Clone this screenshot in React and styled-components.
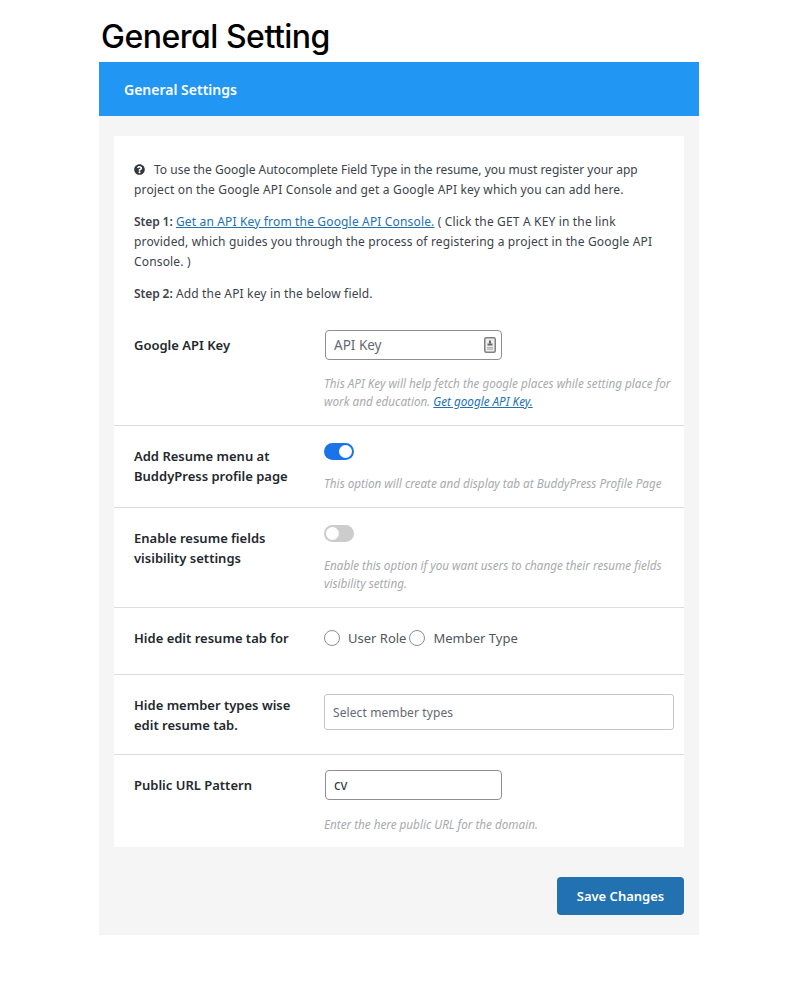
import React from "react";
import styled, { createGlobalStyle } from "styled-components";

const Global = createGlobalStyle`
  html, body {
    margin: 0;
    padding: 0;
    background: #fff;
    font-family: "Noto Sans", "Open Sans", sans-serif;
  }
`;

const Page = styled.div`
  width: 600px;
  margin-left: 99px;
  padding-bottom: 65px;
`;

const Title = styled.h1`
  margin: 0;
  height: 62px;
  padding: 18px 0 0 2px;
  box-sizing: border-box;
  font: 450 32px/38px "Inter", sans-serif;
  font-feature-settings: "cv11" 1;
  letter-spacing: -0.5px;
  color: #000;
`;

const Panel = styled.div`
  background: #f5f5f5;
  width: 600px;
`;

const PanelHead = styled.div`
  height: 54px;
  background: #2196f3;
  color: #fff;
  display: flex;
  align-items: center;
  padding-left: 25px;
  font-size: 14px;
  font-weight: 600;
`;

const PanelBody = styled.div`
  padding: 20px 15px;
`;

const Card = styled.div`
  background: #fff;
  color: #3c434a;
  font-size: 12px;
  line-height: 20px;
`;

const Intro = styled.div`
  padding: 24px 20px 0;

  p {
    margin: 0 0 12px;
    letter-spacing: 0.16px;
  }

  a {
    color: #2271b1;
    text-decoration: underline;
  }

  b {
    font-weight: 600;
    letter-spacing: -0.1px;
  }
`;

const FirstLine = styled.span`
  letter-spacing: 0;
`;

const HelpIcon = styled.svg`
  width: 11px;
  height: 11px;
  margin-right: 9px;
  vertical-align: -1px;
`;

const Row = styled.div`
  display: flex;
  height: ${(p) => p.$h}px;
  box-sizing: border-box;
  padding-top: ${(p) => p.$top}px;
  border-bottom: ${(p) => (p.$last ? "none" : "1px solid #dcdcde")};
`;

const Label = styled.div`
  width: 165px;
  margin: ${(p) => p.$mt}px 25px 0 20px;
  flex: none;
  font-size: 13px;
  font-weight: 600;
  line-height: 20px;
  color: #23282d;
`;

const Field = styled.div`
  width: 350px;
  flex: none;
`;

const InputWrap = styled.div`
  width: 177px;
  height: 30px;
  margin-left: 1px;
  box-sizing: border-box;
  border: 1px solid #8c8f94;
  border-radius: 4px;
  display: flex;
  align-items: center;
  justify-content: space-between;
  padding: 0 5px 0 8px;
  font-size: 13.5px;
  color: ${(p) => (p.$filled ? "#2c3338" : "#646970")};
`;

const Hint = styled.div`
  margin-top: ${(p) => p.$gap}px;
  font-size: 11.7px;
  line-height: 18px;
  font-style: italic;
  color: #a7aaad;

  a {
    color: #2271b1;
    text-decoration: underline;
  }
`;

const Toggle = styled.div`
  width: 30px;
  height: 17px;
  border-radius: 9px;
  background: ${(p) => (p.$on ? "#1a73e8" : "#ccc")};
  display: flex;
  align-items: center;
  justify-content: ${(p) => (p.$on ? "flex-end" : "flex-start")};
  padding: 0 2px;
  box-sizing: border-box;

  &::after {
    content: "";
    width: 13px;
    height: 13px;
    border-radius: 50%;
    background: #fff;
  }
`;

const Radios = styled.div`
  display: flex;
  align-items: center;
  height: 20px;
  font-size: 13px;
  color: #50575e;
`;

const Radio = styled.span`
  width: 16px;
  height: 16px;
  box-sizing: border-box;
  border: 1px solid #8c8f94;
  border-radius: 50%;
  margin-right: 8px;
`;

const RadioText = styled.span`
  margin-right: 3px;
`;

const Select = styled.div`
  width: 350px;
  height: 36px;
  box-sizing: border-box;
  border: 1px solid #c3c4c7;
  border-radius: 3px;
  padding: 1px 0 0 8px;
  display: flex;
  align-items: center;
  font-size: 12px;
  letter-spacing: 0.1px;
  color: #646970;
`;

const Actions = styled.div`
  display: flex;
  justify-content: flex-end;
  margin-top: 30px;
`;

const SaveButton = styled.button`
  width: 127px;
  height: 38px;
  border: none;
  border-radius: 4px;
  background: #2271b1;
  color: #fff;
  font-family: inherit;
  font-size: 13px;
  font-weight: 600;
  padding: 0;
`;

const KeyIcon = () => (
  <svg width="12" height="16" viewBox="0 0 12 16">
    <rect x="0.75" y="0.75" width="10.5" height="14.5" rx="1.5" fill="#ededed" stroke="#808080" strokeWidth="1.5" />
    <rect x="5" y="3.5" width="2" height="3" fill="#666" />
    <rect x="3.5" y="6.5" width="5" height="2" fill="#666" />
    <rect x="3" y="10" width="6" height="1.5" fill="#b0b0b0" />
    <rect x="3" y="12" width="6" height="1" fill="#c0c0c0" />
  </svg>
);

export default function App() {
  return (
    <Page>
      <Global />
      <Title>General Setting</Title>
      <Panel>
        <PanelHead>General Settings</PanelHead>
        <PanelBody>
          <Card>
            <Intro>
              <p>
                <HelpIcon viewBox="0 0 512 512">
                  <path
                    fill="#32373c"
                    d="M504 256c0 137-111 248-248 248S8 393 8 256 119 8 256 8s248 111 248 248zM262.700 90c-54.500 0-89.300 23-116.500 63.800-3.500 5.300-2.300 12.400 2.800 16.300l34.700 26.300c5.200 3.900 12.600 3 16.700-2.100 17.900-22.700 30.200-35.900 57.300-35.900 20.400 0 45.700 13.100 45.700 32.900 0 14.900-12.300 22.600-32.500 33.900C247.400 238.400 216 254.900 216 296v4c0 6.600 5.400 12 12 12h56c6.600 0 12-5.400 12-12v-1.300c0-28.500 83.200-29.700 83.200-106.700 0-58-60.200-102-116.500-102zM256 338c-25.400 0-46 20.600-46 46 0 25.400 20.600 46 46 46s46-20.600 46-46c0-25.400-20.600-46-46-46z"
                  />
                </HelpIcon>
                <FirstLine>
                  To use the Google Autocomplete Field Type in the resume, you must register your app
                </FirstLine>{" "}
                project on the Google API Console and get a Google API key which you can add here.
              </p>
              <p>
                <b>Step 1:</b> <a href="#a">Get an API Key from the Google API Console.</a> ( Click
                the GET A KEY in the link provided, which guides you through the process of
                registering a project in the Google API Console. )
              </p>
              <p>
                <b>Step 2:</b> Add the API key in the below field.
              </p>
            </Intro>
            <Row $h={110} $top={14}>
              <Label $mt={5}>Google API Key</Label>
              <Field>
                <InputWrap>
                  API Key
                  <KeyIcon />
                </InputWrap>
                <Hint $gap={14}>
                  This API Key will help fetch the google places while setting place for work and
                  education. <a href="#b">Get google API Key.</a>
                </Hint>
              </Field>
            </Row>
            <Row $h={82} $top={17}>
              <Label $mt={3}>Add Resume menu at BuddyPress profile page</Label>
              <Field>
                <Toggle $on />
                <Hint $gap={14}>This option will create and display tab at BuddyPress Profile Page</Hint>
              </Field>
            </Row>
            <Row $h={100} $top={17}>
              <Label $mt={3}>Enable resume fields visibility settings</Label>
              <Field>
                <Toggle />
                <Hint $gap={14}>
                  Enable this option if you want users to change their resume fields visibility
                  setting.
                </Hint>
              </Field>
            </Row>
            <Row $h={67} $top={20}>
              <Label $mt={0}>Hide edit resume tab for</Label>
              <Field>
                <Radios>
                  <Radio />
                  <RadioText>User Role</RadioText>
                  <Radio />
                  <RadioText>Member Type</RadioText>
                </Radios>
              </Field>
            </Row>
            <Row $h={80} $top={19}>
              <Label $mt={1}>Hide member types wise edit resume tab.</Label>
              <Field>
                <Select>Select member types</Select>
              </Field>
            </Row>
            <Row $h={92} $top={15} $last>
              <Label $mt={5}>Public URL Pattern</Label>
              <Field>
                <InputWrap $filled>cv</InputWrap>
                <Hint $gap={15}>Enter the here public URL for the domain.</Hint>
              </Field>
            </Row>
          </Card>
          <Actions>
            <SaveButton>Save Changes</SaveButton>
          </Actions>
        </PanelBody>
      </Panel>
    </Page>
  );
}
